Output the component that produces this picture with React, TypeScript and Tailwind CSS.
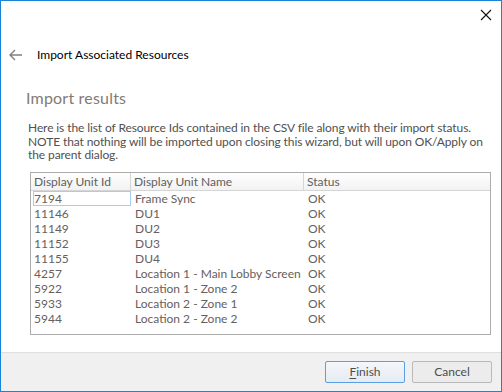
import React from "react";

const rows: [string, string, string][] = [
  ["7194", "Frame Sync", "OK"],
  ["11146", "DU1", "OK"],
  ["11149", "DU2", "OK"],
  ["11152", "DU3", "OK"],
  ["11155", "DU4", "OK"],
  ["4257", "Location 1 - Main Lobby Screen", "OK"],
  ["5922", "Location 1 - Zone 2", "OK"],
  ["5933", "Location 2 - Zone 1", "OK"],
  ["5944", "Location 2 - Zone 2", "OK"],
];

export default function App() {
  return (
    <div
      className="w-[502px] h-[392px] border border-[#1883d7] bg-white flex flex-col text-[12px]"
      style={{ fontFamily: 'Lato, "Noto Sans", sans-serif' }}
    >
      <div className="h-[40px] flex justify-end items-start pt-[8px] pr-[9px]">
        <svg width="12" height="12" viewBox="0 0 12 12">
          <path d="M1 1 L11 11 M11 1 L1 11" stroke="#111" strokeWidth="1.1" fill="none" />
        </svg>
      </div>
      <div className="flex items-center h-[28px] pl-[8px]">
        <svg width="14" height="12" viewBox="0 0 14 12">
          <path d="M1 6 H13 M6 1 L1 6 L6 11" stroke="#808080" strokeWidth="1.4" fill="none" />
        </svg>
        <span className="ml-[14px] text-black">Import Associated Resources</span>
      </div>
      <div className="pl-[25px] pt-[19px] text-[16px] text-[#857a73] leading-[20px] tracking-[0.2px]">
        Import results
      </div>
      <div className="pl-[27px] pr-[10px] mt-[13px] text-[#505050] leading-[13.5px] text-[12px] tracking-[-0.1px] whitespace-nowrap">
        Here is the list of Resource Ids contained in the CSV file along with their import status.
        <br />
        NOTE that nothing will be imported upon closing this wizard, but will upon OK/Apply on
        <br />
        the parent dialog.
      </div>
      <div className="ml-[29px] mt-[10px] w-[461px] h-[163px] border border-[#acacac] text-[12px] text-[#666160]">
        <div className="flex h-[18px] border-b border-[#d5d5d5] bg-gradient-to-b from-white to-[#f2f2f2] text-[#606060]">
          <div className="w-[100px] pl-[3px] border-r border-[#d5d5d5] leading-[18px]">Display Unit Id</div>
          <div className="w-[173px] pl-[3px] border-r border-[#d5d5d5] leading-[18px]">Display Unit Name</div>
          <div className="flex-1 pl-[3px] leading-[18px]">Status</div>
        </div>
        {rows.map((r, i) => (
          <div key={i} className="flex h-[15px] leading-[15px]">
            <div className="w-[100px] pl-[2px]">
              <div
                className={
                  i === 0
                    ? "border border-[#a6cdf0] h-[15px] leading-[13px] w-[98px]"
                    : "pl-[1px]"
                }
              >
                {r[0]}
              </div>
            </div>
            <div className="w-[173px] pl-[4px] whitespace-nowrap">{r[1]}</div>
            <div className="flex-1 pl-[4px]">{r[2]}</div>
          </div>
        ))}
      </div>
      <div className="mt-auto h-[39px] bg-[#f0f0f0] border-t border-[#dfdfdf] flex justify-end items-center gap-[7px] pr-[9px] pb-[1px]">
        <button className="w-[80px] h-[22px] border border-[#5a9ee3] rounded-[2px] bg-gradient-to-b from-[#f4f7fb] to-[#e6ebf3] text-[#4d4d4d] text-[12px] leading-[20px]">
          <span className="underline underline-offset-2">F</span>inish
        </button>
        <button className="w-[80px] h-[22px] border border-[#b9b9b9] rounded-[2px] bg-[#ececec] text-[#4d4d4d] text-[12px] leading-[20px]">
          Cancel
        </button>
      </div>
    </div>
  );
}
